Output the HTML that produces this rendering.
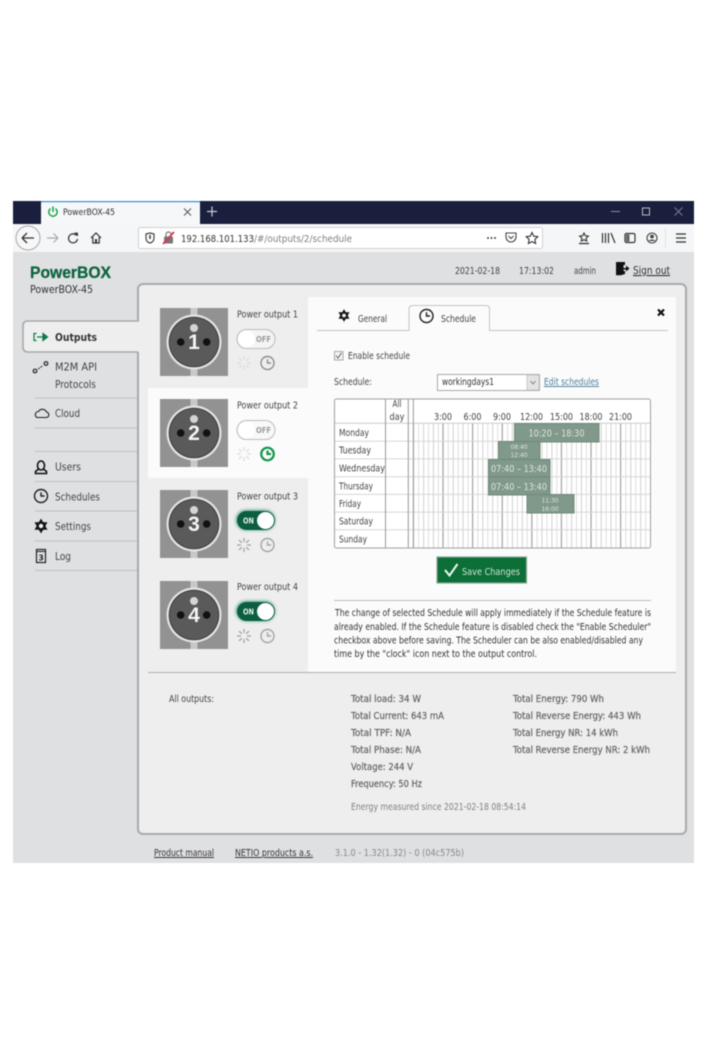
<!DOCTYPE html>
<html><head><meta charset="utf-8"><title>PowerBOX-45</title>
<style>
html,body{margin:0;padding:0;background:#fff;width:709px;height:1063px;overflow:hidden}
svg{display:block;filter:blur(.45px)}
text{font-family:"DejaVu Sans","Liberation Sans",sans-serif;font-size:9.6px;fill:#444;white-space:pre}
.s{fill:#666;stroke:#666;stroke-width:.22px}
</style></head><body>
<svg xmlns="http://www.w3.org/2000/svg" width="709" height="1063" viewBox="0 0 709 1063">
<defs>
<pattern id="vl" x="413.3" y="0" width="9.867" height="10" patternUnits="userSpaceOnUse">
<rect x="0" y="0" width=".8" height="10" fill="#c4c4c4"/><rect x="4.93" y="0" width=".8" height="10" fill="#d6d6d6"/>
</pattern>
<filter id="gl" x="-30%" y="-50%" width="160%" height="200%"><feGaussianBlur stdDeviation="1.6"/></filter>
<g id="conn">
<rect x="0" y="0" width="68" height="68" fill="#929292"/>
<rect x="30.500" y="0" width="7" height="68" fill="#c8c8c8"/>
<circle cx="34" cy="34" r="27.500" fill="#e4e4e4"/>
<circle cx="34" cy="34" r="25.300" fill="#3c3c3c"/>
<circle cx="34" cy="34" r="24.300" fill="#5a5a5a"/>
<circle cx="34" cy="20" r="4" fill="#d4d4d4"/>
<circle cx="20.700" cy="34" r="3.800" fill="#111"/>
<circle cx="46.700" cy="34" r="3.800" fill="#111"/>
</g>
<g id="spin" stroke-width="1.300" fill="none">
<path d="M0-7V-3M0 7V3M-7 0H-3M7 0H3M-5-5L-2.200-2.200M5 5L2.200 2.200M-5 5L-2.200 2.200M5-5L2.200-2.200"/>
</g>
<g id="clock" fill="none" stroke-width="1.400">
<circle cx="0" cy="0" r="6.500"/><path d="M0-3.800V0H3.500"/>
</g>
<g id="gear">
<path d="M0-7.500L6.500 3.800H-6.500ZM0 7.500L-6.500-3.800H6.500Z" fill="#151515"/>
<circle r="4.600" fill="#151515"/><circle r="2.200" fill="#eee"/>
</g>
</defs>

<!-- browser chrome -->
<rect x="13" y="252" width="681" height="611" fill="#dfe0e2"/>
<rect x="13" y="201" width="681" height="23" fill="#1a1f3e"/>
<rect x="41" y="201" width="159" height="23" fill="#f6f7f8"/>
<rect x="41" y="201" width="159" height="1.200" fill="#3b8fe0"/>
<rect x="13" y="224" width="681" height="28" fill="#f5f6f7"/>
<circle cx="53" cy="212" r="4.200" fill="none" stroke="#17a34a" stroke-width="1.500" stroke-dasharray="21 6" transform="rotate(-55 53 212)"/>
<path d="M53 206.500V212" stroke="#17a34a" stroke-width="1.500"/>
<text x="63" y="215" textLength="52" lengthAdjust="spacingAndGlyphs" style="font-size:9px;fill:#333">PowerBOX-45</text>
<path d="M184 208.500L191 215.500M191 208.500L184 215.500" stroke="#555" stroke-width="1"/>
<path d="M212 206.500V216.500M207 211.500H217" stroke="#c8cad4" stroke-width="1.200"/>
<path d="M611 211.500H620" stroke="#8c90a4" stroke-width="1"/>
<rect x="642.500" y="208" width="7" height="7" fill="none" stroke="#b8bbc8" stroke-width="1"/>
<path d="M674.500 207.500L682.500 215.500M682.500 207.500L674.500 215.500" stroke="#777b92" stroke-width="1"/>

<circle cx="28" cy="238" r="12" fill="#f7f7f7" stroke="#a8a8a8" stroke-width="1"/>
<path d="M22 238H34M22 238L27 233M22 238L27 243" fill="none" stroke="#333" stroke-width="1.300"/>
<path d="M47 238H58M58 238L53.500 233.500M58 238L53.500 242.500" fill="none" stroke="#a9a9a9" stroke-width="1.200"/>
<path d="M76.500 235.500A4.500 4.500 0 1 0 77.500 239" fill="none" stroke="#333" stroke-width="1.200"/><path d="M74 232.500L78 232.800V236.500Z" fill="#333"/>
<path d="M91 238L96 233L101 238M92.800 237V243H99.200V237" fill="none" stroke="#333" stroke-width="1.200"/><rect x="95" y="239" width="2" height="4" fill="#333"/>

<rect x="138.500" y="227.500" width="404" height="21" rx="2" fill="#fff" stroke="#cfd0d2"/>
<path d="M146 234L150 233L154 234V238C154 241 152 242.500 150 243C148 242.500 146 241 146 238Z" fill="none" stroke="#444" stroke-width="1.200"/><rect x="149.200" y="235" width="1.600" height="4" fill="#444"/>
<rect x="164" y="236.500" width="9" height="7" rx="1" fill="#777"/><path d="M166 236.500V234.500A2.500 2.500 0 0 1 171 234.500" fill="none" stroke="#777" stroke-width="1.200"/>
<path d="M163 244L174 232" stroke="#d33a4e" stroke-width="1.800"/>
<text x="181" y="242" textLength="73" lengthAdjust="spacingAndGlyphs" style="font-size:10px;fill:#333">192.168.101.133</text>
<text x="254" y="242" textLength="98" lengthAdjust="spacingAndGlyphs" style="font-size:10px;fill:#808080">/#/outputs/2/schedule</text>
<circle cx="488" cy="238" r="1" fill="#444"/><circle cx="491.500" cy="238" r="1" fill="#444"/><circle cx="495" cy="238" r="1" fill="#444"/>
<path d="M506 233H516V237A5 5 0 0 1 506 237Z" fill="none" stroke="#444" stroke-width="1.100"/><path d="M508.500 236L511 238.500L513.500 236" fill="none" stroke="#444" stroke-width="1.100"/>
<path d="M532 232.500L533.800 236.200L537.800 236.700L534.900 239.500L535.600 243.500L532 241.600L528.400 243.500L529.100 239.500L526.200 236.700L530.200 236.200Z" fill="none" stroke="#333" stroke-width="1.100"/>
<path d="M584 233L585.300 235.700L588.300 236.100L586.100 238.200L586.700 241L584 239.700L581.300 241L581.900 238.200L579.700 236.100L582.700 235.700Z" fill="none" stroke="#333" stroke-width="1.100"/><path d="M579 243.500H589" stroke="#333" stroke-width="1.300"/>
<path d="M602.500 233V243M605.500 233V243M608.500 233V243M611 233L615 243" fill="none" stroke="#333" stroke-width="1.200"/>
<rect x="625" y="233.500" width="10" height="9" rx="1.500" fill="none" stroke="#333" stroke-width="1.200"/><rect x="626" y="234.500" width="3.500" height="7" fill="#666"/>
<circle cx="652" cy="238" r="5" fill="none" stroke="#444" stroke-width="1.100"/><circle cx="652" cy="236.500" r="1.900" fill="#444"/><path d="M648.500 241A4 3 0 0 1 655.500 241" fill="#444"/>
<path d="M665.500 228V248" stroke="#e3e3e3"/>
<path d="M676 234H686M676 238H686M676 242H686" stroke="#333" stroke-width="1.200"/>

<!-- page header -->
<text x="30" y="278" textLength="81" lengthAdjust="spacingAndGlyphs" style="font-family:'Liberation Sans',sans-serif;font-size:17px;font-weight:bold;fill:#0e6442;stroke:#0e6442;stroke-width:.3px">PowerBOX</text>
<text x="30" y="293" textLength="63" lengthAdjust="spacingAndGlyphs" style="font-size:11px;fill:#333">PowerBOX-45</text>
<text x="455" y="274" textLength="45" lengthAdjust="spacingAndGlyphs">2021-02-18</text>
<text x="519" y="274" textLength="35" lengthAdjust="spacingAndGlyphs">17:13:02</text>
<text x="574" y="274" textLength="22" lengthAdjust="spacingAndGlyphs">admin</text>
<path d="M616 262H625V265H623.500V271H625V274L621 275.200H616Z" fill="#111"/><path d="M623 268H626V265.500L629.500 268.500L626 271.500V269.500H623Z" fill="#111"/>
<text x="633" y="274" textLength="37" lengthAdjust="spacingAndGlyphs" style="font-size:11px;fill:#333" text-decoration="underline">Sign out</text>

<!-- panel -->
<rect x="138" y="284" width="548" height="550" rx="5" fill="#eeeeee" stroke="#a8aaaa" stroke-width="2"/>
<path d="M137 321H28Q23 321 23 326V347Q23 352 28 352H139V322Z" fill="#eeeeee"/>
<path d="M138 321H28Q23 321 23 326V347Q23 352 28 352H138" fill="none" stroke="#a8aaaa" stroke-width="1.600"/>

<!-- nav -->
<path d="M35 398H137M35 428H137M35 451.500H137M35 481.500H137M35 511H137M35 541H137M35 570.500H137" stroke="#bfc0c1" stroke-width="1"/>
<path d="M36.500 333.500H34V340.500H36.500" fill="none" stroke="#0e7a4a" stroke-width="1.200"/><path d="M37 337H43M43 333.500L47.500 337L43 340.500Z" fill="#0e7a4a" stroke="#0e7a4a" stroke-width="1.200"/>
<text x="55" y="341" textLength="42" lengthAdjust="spacingAndGlyphs" style="font-size:10.500px;fill:#333;font-weight:bold">Outputs</text>
<circle cx="35" cy="371" r="1.800" fill="none" stroke="#222" stroke-width="1.200"/><circle cx="46" cy="363.500" r="1.800" fill="none" stroke="#222" stroke-width="1.200"/><path d="M38 369L43 365.500" stroke="#222" stroke-width="1" stroke-dasharray="2 1"/>
<text x="55" y="370.500" textLength="42" lengthAdjust="spacingAndGlyphs" style="font-size:10.500px">M2M API</text>
<text x="55" y="388" textLength="41" lengthAdjust="spacingAndGlyphs" style="font-size:10.500px">Protocols</text>
<path d="M37 417.500H46.500A2.800 2.800 0 0 0 46.500 412A4.500 4.500 0 0 0 38.500 411.500A3.200 3.200 0 0 0 37 417.500Z" fill="none" stroke="#222" stroke-width="1.100"/>
<text x="55" y="417" textLength="25" lengthAdjust="spacingAndGlyphs" style="font-size:10.500px">Cloud</text>
<path d="M37.500 465.500A3.500 4.500 0 1 1 44.500 465.500A3.500 4.500 0 1 1 37.500 465.500ZM38.500 469L35.500 471.500V473.500H46.500V471.500L43.500 469" fill="none" stroke="#111" stroke-width="1.600"/>
<text x="55" y="470.500" textLength="26" lengthAdjust="spacingAndGlyphs" style="font-size:10.500px">Users</text>
<use href="#clock" transform="translate(41 496)" stroke="#222"/>
<text x="55" y="500.500" textLength="45" lengthAdjust="spacingAndGlyphs" style="font-size:10.500px">Schedules</text>
<use href="#gear" transform="translate(41 526)"/>
<text x="55" y="530" textLength="36" lengthAdjust="spacingAndGlyphs" style="font-size:10.500px">Settings</text>
<rect x="36.500" y="549.500" width="9" height="13" fill="none" stroke="#222" stroke-width="1.200"/><path d="M36.500 551.500H45.500" stroke="#222" stroke-width="1"/>
<text x="38.500" y="560.500" style="font-size:7.500px;font-weight:bold;fill:#222">3</text>
<text x="55" y="560" textLength="16" lengthAdjust="spacingAndGlyphs" style="font-size:10.500px">Log</text>

<!-- white regions -->
<rect x="148" y="388" width="162" height="90" rx="2" fill="#fbfbfb"/>
<rect x="308" y="297" width="368" height="375" rx="2" fill="#fbfbfb"/>
<path d="M148 672.500H676" stroke="#b0b0b0" stroke-width="1"/>

<!-- outputs -->
<use href="#conn" x="160" y="308"/>
<text x="194" y="349" text-anchor="middle" style="font-family:'Liberation Sans',sans-serif;font-size:21px;font-weight:bold;fill:#f4f4f4">1</text>
<text x="237" y="317.500" textLength="61" lengthAdjust="spacingAndGlyphs">Power output 1</text>
<rect x="237" y="329.500" width="38" height="19" rx="9.500" fill="#f4f4f4" stroke="#bbb"/>
<circle cx="246.500" cy="339" r="8.500" fill="#fff"/>
<text x="256" y="342" textLength="15" lengthAdjust="spacingAndGlyphs" style="font-size:7.500px;font-weight:bold;fill:#9a9a9a">OFF</text>
<use href="#spin" transform="translate(244 363)" stroke="#dcdcdc"/>
<use href="#clock" transform="translate(267.500 363)" stroke="#8f8f8f"/>

<use href="#conn" x="160" y="399"/>
<text x="194" y="440" text-anchor="middle" style="font-family:'Liberation Sans',sans-serif;font-size:21px;font-weight:bold;fill:#f4f4f4">2</text>
<text x="237" y="408.500" textLength="61" lengthAdjust="spacingAndGlyphs">Power output 2</text>
<rect x="237" y="420.500" width="38" height="19" rx="9.500" fill="#f8f8f8" stroke="#bbb"/>
<circle cx="246.500" cy="430" r="8.500" fill="#fff"/>
<text x="256" y="433" textLength="15" lengthAdjust="spacingAndGlyphs" style="font-size:7.500px;font-weight:bold;fill:#9a9a9a">OFF</text>
<use href="#spin" transform="translate(244 454)" stroke="#dcdcdc"/>
<g transform="translate(267.500 454)" fill="none" stroke="#10984a" stroke-width="2.200"><circle r="6.300"/><path d="M0-3.500V0H3.500"/></g>

<use href="#conn" x="160" y="490"/>
<text x="194" y="531" text-anchor="middle" style="font-family:'Liberation Sans',sans-serif;font-size:21px;font-weight:bold;fill:#f4f4f4">3</text>
<text x="237" y="499.500" textLength="61" lengthAdjust="spacingAndGlyphs">Power output 3</text>
<rect x="236" y="510" width="39" height="20" rx="10" fill="#4ba37f" filter="url(#gl)"/>
<rect x="237" y="511" width="38" height="19" rx="9.500" fill="#0b5e40"/>
<circle cx="265.500" cy="520.500" r="8.500" fill="#fff"/>
<text x="243" y="523.500" textLength="11" lengthAdjust="spacingAndGlyphs" style="font-size:7.500px;font-weight:bold;fill:#e8f0ec">ON</text>
<use href="#spin" transform="translate(244 545)" stroke="#a5a5a5"/>
<use href="#clock" transform="translate(267.500 545)" stroke="#a5a5a5"/>

<use href="#conn" x="160" y="581"/>
<text x="194" y="622" text-anchor="middle" style="font-family:'Liberation Sans',sans-serif;font-size:21px;font-weight:bold;fill:#f4f4f4">4</text>
<text x="237" y="590" textLength="61" lengthAdjust="spacingAndGlyphs">Power output 4</text>
<rect x="236" y="601" width="39" height="20" rx="10" fill="#4ba37f" filter="url(#gl)"/>
<rect x="237" y="602" width="38" height="19" rx="9.500" fill="#0b5e40"/>
<circle cx="265.500" cy="611.500" r="8.500" fill="#fff"/>
<text x="243" y="614.500" textLength="11" lengthAdjust="spacingAndGlyphs" style="font-size:7.500px;font-weight:bold;fill:#e8f0ec">ON</text>
<use href="#spin" transform="translate(244 636)" stroke="#a5a5a5"/>
<use href="#clock" transform="translate(267.500 636)" stroke="#a5a5a5"/>

<!-- tabs -->
<path d="M317 330.500H409V309Q409 305.500 412.500 305.500H486Q489.500 305.500 489.500 309V330.500H668" fill="none" stroke="#c4c4c4" stroke-width="1"/>
<use href="#gear" transform="translate(344 315.500) scale(.85)"/>
<text x="358" y="322" textLength="29" lengthAdjust="spacingAndGlyphs">General</text>
<use href="#clock" transform="translate(426.500 316)" stroke="#222"/>
<text x="441" y="322" textLength="35" lengthAdjust="spacingAndGlyphs">Schedule</text>
<path d="M658 309.500L664 315.500M664 309.500L658 315.500" stroke="#111" stroke-width="2.200"/>

<rect x="334.500" y="351.500" width="8.500" height="8.500" fill="#f4f4f4" stroke="#aaa"/>
<path d="M336 355.500L338 358L341.500 352.800" fill="none" stroke="#666" stroke-width="1"/>
<text x="348" y="359" textLength="62" lengthAdjust="spacingAndGlyphs">Enable schedule</text>
<text x="334" y="385" textLength="38" lengthAdjust="spacingAndGlyphs">Schedule:</text>
<rect x="437.500" y="374.500" width="102" height="16" fill="#fff" stroke="#aaa"/>
<rect x="527" y="375" width="12" height="15" fill="#e4e4e4" stroke="#bbb" stroke-width=".7"/>
<path d="M530.500 381L533 384L535.500 381" fill="none" stroke="#888"/>
<text x="442" y="385" textLength="52" lengthAdjust="spacingAndGlyphs" style="fill:#333">workingdays1</text>
<text x="544" y="385" textLength="55" lengthAdjust="spacingAndGlyphs" text-decoration="underline" style="fill:#4d7f9e">Edit schedules</text>

<!-- table -->
<rect x="334.500" y="399" width="316" height="149" rx="2" fill="#fff"/>
<rect x="413.300" y="423" width="237" height="125" fill="url(#vl)"/>
<path d="M442.900 423V548M472.500 423V548M502.100 423V548M531.700 423V548M561.300 423V548M590.900 423V548M620.500 423V548" stroke="#a2a2a2" stroke-width="1"/>
<path d="M335 441.200H650M335 458.900H650M335 476.700H650M335 494.400H650M335 512.100H650M335 529.800H650" stroke="#d6d6d6" stroke-width="1"/>
<path d="M335 423.300H650" stroke="#cccccc" stroke-width="1"/>
<path d="M385.500 399V548M408.300 399V548M413.300 399V548" stroke="#989898" stroke-width="1"/>
<rect x="334.500" y="399" width="316" height="149" rx="2" fill="none" stroke="#a0a0a0" stroke-width="1"/>

<text x="397" y="407" text-anchor="middle" textLength="9" lengthAdjust="spacingAndGlyphs">All</text>
<text x="397" y="420" text-anchor="middle" textLength="15" lengthAdjust="spacingAndGlyphs">day</text>
<text x="443" y="420" text-anchor="middle" textLength="18" lengthAdjust="spacingAndGlyphs">3:00</text>
<text x="472.500" y="420" text-anchor="middle" textLength="18" lengthAdjust="spacingAndGlyphs">6:00</text>
<text x="502" y="420" text-anchor="middle" textLength="18" lengthAdjust="spacingAndGlyphs">9:00</text>
<text x="531.500" y="420" text-anchor="middle" textLength="23" lengthAdjust="spacingAndGlyphs">12:00</text>
<text x="561.500" y="420" text-anchor="middle" textLength="23" lengthAdjust="spacingAndGlyphs">15:00</text>
<text x="591" y="420" text-anchor="middle" textLength="23" lengthAdjust="spacingAndGlyphs">18:00</text>
<text x="620.500" y="420" text-anchor="middle" textLength="23" lengthAdjust="spacingAndGlyphs">21:00</text>

<text x="339" y="436" textLength="30" lengthAdjust="spacingAndGlyphs">Monday</text>
<text x="339" y="453.500" textLength="32" lengthAdjust="spacingAndGlyphs">Tuesday</text>
<text x="339" y="471.500" textLength="46" lengthAdjust="spacingAndGlyphs">Wednesday</text>
<text x="339" y="489.500" textLength="34" lengthAdjust="spacingAndGlyphs">Thursday</text>
<text x="339" y="507" textLength="22" lengthAdjust="spacingAndGlyphs">Friday</text>
<text x="339" y="524.500" textLength="34" lengthAdjust="spacingAndGlyphs">Saturday</text>
<text x="339" y="542.500" textLength="28" lengthAdjust="spacingAndGlyphs">Sunday</text>

<g fill="#80998a" stroke="#6f8a79" stroke-width="1">
<rect x="514.500" y="423.500" width="84.500" height="18.500"/>
<rect x="498.500" y="441.500" width="41.500" height="18.500"/>
<rect x="488.500" y="459.500" width="61.500" height="18"/>
<rect x="488.500" y="477" width="61.500" height="18"/>
<rect x="527" y="494.500" width="47" height="18.500"/>
</g>
<text x="556.500" y="436.500" text-anchor="middle" textLength="56" lengthAdjust="spacingAndGlyphs" style="fill:#dbe6df">10:20 – 18:30</text>
<text x="519" y="449" text-anchor="middle" textLength="17" lengthAdjust="spacingAndGlyphs" style="font-size:6px;fill:#dbe6df">08:40</text>
<text x="519" y="457" text-anchor="middle" textLength="17" lengthAdjust="spacingAndGlyphs" style="font-size:6px;fill:#dbe6df">12:40</text>
<text x="519" y="472" text-anchor="middle" textLength="56" lengthAdjust="spacingAndGlyphs" style="fill:#dbe6df">07:40 – 13:40</text>
<text x="519" y="490" text-anchor="middle" textLength="56" lengthAdjust="spacingAndGlyphs" style="fill:#dbe6df">07:40 – 13:40</text>
<text x="550" y="502.500" text-anchor="middle" textLength="17" lengthAdjust="spacingAndGlyphs" style="font-size:6px;fill:#dbe6df">11:30</text>
<text x="550" y="511" text-anchor="middle" textLength="17" lengthAdjust="spacingAndGlyphs" style="font-size:6px;fill:#dbe6df">16:00</text>

<!-- save -->
<rect x="437" y="557" width="89.500" height="26" fill="#0c6f37" stroke="#8ba596" stroke-width="1.200"/>
<path d="M445 570L449.500 575.500L457.500 564" fill="none" stroke="#eef7f0" stroke-width="2"/>
<text x="462" y="575" textLength="58" lengthAdjust="spacingAndGlyphs" style="fill:#cfe3d6">Save Changes</text>

<path d="M334 600.500H651" stroke="#bcbcbc" stroke-width="1"/>
<text x="335" y="616" textLength="316" lengthAdjust="spacingAndGlyphs" style="fill:#333">The change of selected Schedule will apply immediately if the Schedule feature is</text>
<text x="334" y="630" textLength="317" lengthAdjust="spacingAndGlyphs" style="fill:#333">already enabled. If the Schedule feature is disabled check the "Enable Scheduler"</text>
<text x="334" y="643.500" textLength="309" lengthAdjust="spacingAndGlyphs" style="fill:#333">checkbox above before saving. The Scheduler can be also enabled/disabled any</text>
<text x="334" y="657" textLength="203" lengthAdjust="spacingAndGlyphs" style="fill:#333">time by the "clock" icon next to the output control.</text>

<!-- stats -->
<text x="169" y="702" textLength="45" lengthAdjust="spacingAndGlyphs">All outputs:</text>
<text x="351" y="702" textLength="70" lengthAdjust="spacingAndGlyphs" class="s">Total load: 34 W</text>
<text x="351" y="719" textLength="93" lengthAdjust="spacingAndGlyphs" class="s">Total Current: 643 mA</text>
<text x="351" y="736" textLength="60" lengthAdjust="spacingAndGlyphs" class="s">Total TPF: N/A</text>
<text x="351" y="753" textLength="70" lengthAdjust="spacingAndGlyphs" class="s">Total Phase: N/A</text>
<text x="351" y="770" textLength="62" lengthAdjust="spacingAndGlyphs" class="s">Voltage: 244 V</text>
<text x="351" y="787" textLength="71" lengthAdjust="spacingAndGlyphs" class="s">Frequency: 50 Hz</text>
<text x="513" y="702" textLength="91" lengthAdjust="spacingAndGlyphs" class="s">Total Energy: 790 Wh</text>
<text x="513" y="719" textLength="128" lengthAdjust="spacingAndGlyphs" class="s">Total Reverse Energy: 443 Wh</text>
<text x="513" y="736" textLength="105" lengthAdjust="spacingAndGlyphs" class="s">Total Energy NR: 14 kWh</text>
<text x="513" y="753" textLength="137" lengthAdjust="spacingAndGlyphs" class="s">Total Reverse Energy NR: 2 kWh</text>
<text x="351" y="810" textLength="175" lengthAdjust="spacingAndGlyphs" style="fill:#808080">Energy measured since 2021-02-18 08:54:14</text>

<!-- footer -->
<text x="154" y="856" textLength="60" lengthAdjust="spacingAndGlyphs" text-decoration="underline" style="fill:#333">Product manual</text>
<text x="235" y="856" textLength="78" lengthAdjust="spacingAndGlyphs" text-decoration="underline" style="fill:#333">NETIO products a.s.</text>
<text x="335" y="856" textLength="129" lengthAdjust="spacingAndGlyphs" style="fill:#888">3.1.0 - 1.32(1.32) - 0 (04c575b)</text>
</svg>
</body></html>
